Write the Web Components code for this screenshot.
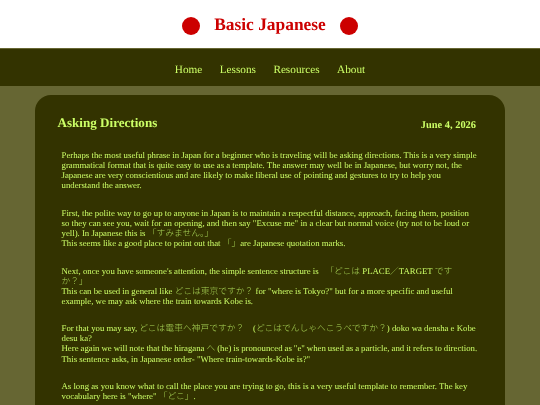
<!DOCTYPE html>
<html lang="en">
<head>
<meta charset="utf-8">
<title>Basic Japanese</title>
<style>
    html, body { margin: 0; height: 100%; overflow: hidden; }
    body {
        background: #666633;
        font-family: "Liberation Serif", "Noto Sans CJK JP", serif;
        color: #ccff66;
        text-rendering: geometricPrecision;
        filter: blur(0.4px);
    }
    .one-line { white-space: nowrap; word-spacing: -0.2px; }
</style>
</head>
<body>
<site-header>Basic Japanese</site-header>
<site-nav>
    <a href="#">Home</a>
    <a href="#">Lessons</a>
    <a href="#">Resources</a>
    <a href="#">About</a>
</site-nav>
<lesson-card heading="Asking Directions" date="June 4, 2026">
    <lesson-para>Perhaps the most useful phrase in Japan for a beginner who is traveling will be asking directions. This is a very simple grammatical format that is quite easy to use as a template. The answer may well be in Japanese, but worry not, the Japanese are very conscientious and are likely to make liberal use of pointing and gestures to try to help you understand the answer.</lesson-para>
    <lesson-para>First, the polite way to go up to anyone in Japan is to maintain a respectful distance, approach, facing them, position so they can see you, wait for an opening, and then say "Excuse me" in a clear but normal voice (try not to be loud or yell). In Japanese this is <ja-text>「すみません。」</ja-text><br>This seems like a good place to point out that <ja-text>「」</ja-text>are Japanese quotation marks.</lesson-para>
    <lesson-para>Next, once you have someone's attention, the simple sentence structure is &nbsp;&nbsp;<ja-text>「どこは</ja-text> PLACE<ja-text>／</ja-text>TARGET <ja-text>ですか？」</ja-text><br>This can be used in general like <ja-text>どこは東京ですか？</ja-text> for "where is Tokyo?" but for a more specific and useful example, we may ask where the train towards Kobe is.</lesson-para>
    <lesson-para>For that you may say, <ja-text>どこは電車へ神戸ですか？</ja-text> &nbsp;&nbsp;&nbsp;(<ja-text>どこはでんしゃへこうべですか？</ja-text>) doko wa densha e Kobe desu ka?<br><span class="one-line">Here again we will note that the hiragana <ja-text>へ</ja-text> (he) is pronounced as "e" when used as a particle, and it refers to direction.</span> This sentence asks, in Japanese order- "Where train-towards-Kobe is?"</lesson-para>
    <lesson-para>As long as you know what to call the place you are trying to go, this is a very useful template to remember. The key vocabulary here is "where" <ja-text>「どこ」</ja-text>.</lesson-para>
</lesson-card>

<script>
class SiteHeader extends HTMLElement {
    connectedCallback() {
        const shadow = this.attachShadow({ mode: "open" });
        shadow.innerHTML = `
            <style>
                :host {
                    display: flex;
                    justify-content: center;
                    align-items: center;
                    box-sizing: border-box;
                    height: 49px;
                    padding-top: 3px;
                    gap: 14.5px;
                    background: #ffffff;
                    border-bottom: 1px solid #666633;
                }
                .dot {
                    width: 18px;
                    height: 18px;
                    border-radius: 50%;
                    background: #cc0000;
                }
                h1 {
                    margin: 0 0 2px;
                    font-size: 17.4px;
                    font-weight: bold;
                    color: #cc0000;
                }
            </style>
            <span class="dot"></span>
            <h1><slot></slot></h1>
            <span class="dot"></span>
        `;
    }
}

class SiteNav extends HTMLElement {
    connectedCallback() {
        const shadow = this.attachShadow({ mode: "open" });
        shadow.innerHTML = `
            <style>
                :host {
                    display: flex;
                    justify-content: center;
                    align-items: center;
                    box-sizing: border-box;
                    gap: 17.4px;
                    height: 37px;
                    padding-top: 4.6px;
                    background: #333300;
                    font-size: 11.25px;
                }
                ::slotted(a) {
                    color: #ccff66;
                    text-decoration: none;
                }
            </style>
            <slot></slot>
        `;
    }
}

class LessonCard extends HTMLElement {
    connectedCallback() {
        const shadow = this.attachShadow({ mode: "open" });
        shadow.innerHTML = `
            <style>
                :host {
                    display: block;
                    margin: 9px 35px 0;
                    padding: 20px 26.5px 20px 22.5px;
                    background: #333300;
                    border-radius: 16px;
                }
                .top {
                    display: flex;
                    justify-content: space-between;
                    align-items: flex-start;
                    padding-right: 2.5px;
                }
                h2 {
                    margin: 0;
                    font-size: 13.1px;
                    font-weight: bold;
                }
                .date {
                    margin-top: 5px;
                    font-size: 10.4px;
                    font-weight: bold;
                }
                .body {
                    display: flex;
                    flex-direction: column;
                    gap: 17.4px;
                    margin-top: 19px;
                    padding-left: 4px;
                }
            </style>
            <div class="top">
                <h2>${this.getAttribute("heading")}</h2>
                <span class="date">${this.getAttribute("date")}</span>
            </div>
            <div class="body"><slot></slot></div>
        `;
    }
}

class LessonPara extends HTMLElement {
    connectedCallback() {
        const shadow = this.attachShadow({ mode: "open" });
        shadow.innerHTML = `
            <style>
                :host {
                    display: block;
                    font-size: 8.77px;
                    line-height: 10.1px;
                }
            </style>
            <slot></slot>
        `;
    }
}

class JaText extends HTMLElement {
    connectedCallback() {
        const shadow = this.attachShadow({ mode: "open" });
        // no whitespace around the slot, it would show as a space in inline text
        shadow.innerHTML = `<style>
                :host {
                    display: inline;
                    font-weight: 300;
                    color: #a8d455;
                }
            </style><slot></slot>`;
    }
}

customElements.define("site-header", SiteHeader);
customElements.define("site-nav", SiteNav);
customElements.define("lesson-card", LessonCard);
customElements.define("lesson-para", LessonPara);
customElements.define("ja-text", JaText);
</script>
</body>
</html>
